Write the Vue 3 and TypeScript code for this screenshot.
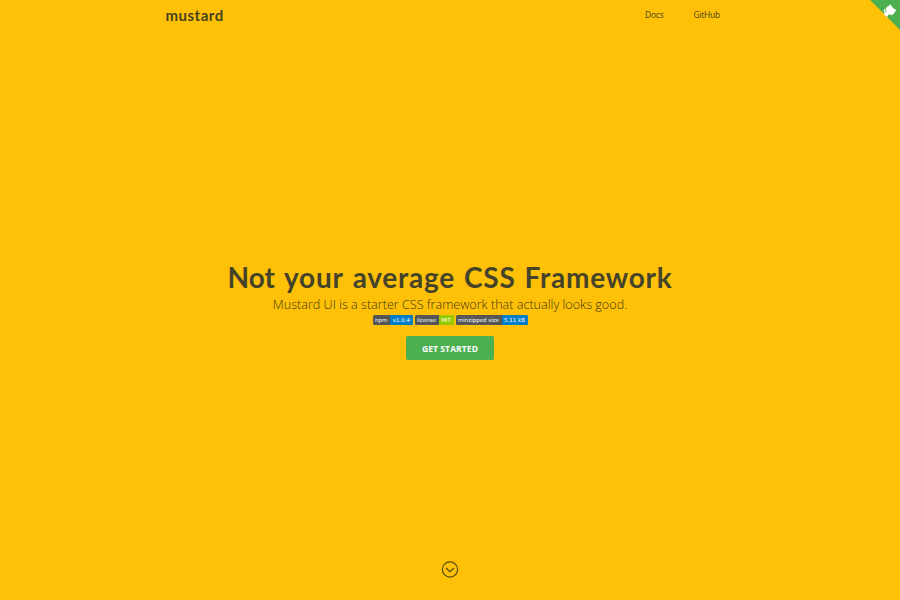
<script setup lang="ts">
interface Badge {
  label: string
  value: string
  kind: string
}

const links: string[] = ['Docs', 'GitHub']
const words: string[] = ['Not', 'your', 'average', 'CSS', 'Framework']
const badges: Badge[] = [
  { label: 'npm', value: 'v1.0.4', kind: 'npm' },
  { label: 'license', value: 'MIT', kind: 'license' },
  { label: 'minzipped size', value: '5.11 kB', kind: 'size' },
]
</script>

<template>
  <div class="page">
    <header class="bar">
      <a class="brand">mustard</a>
      <nav class="nav">
        <a v-for="link in links" :key="link">{{ link }}</a>
      </nav>
    </header>
    <a class="corner" aria-label="GitHub">
      <svg viewBox="0 0 250 250" width="30" height="30">
        <path fill="#4caf50" d="M0 0 L115 115 L130 115 L142 142 L250 250 L250 0 Z" />
        <path fill="#fff" stroke="#fff" stroke-width="5" d="M128.3 109C113.8 99.7 119 89.6 119 89.6C122 82.7 120.5 78.6 120.5 78.6C119.2 72 123.4 76.3 123.4 76.3C127.3 80.9 125.5 87.3 125.5 87.3C122.9 97.6 130.6 101.9 134.4 103.2" />
        <path fill="#fff" stroke="#fff" stroke-width="5" d="M115 115C114.9 115.1 118.7 116.5 119.8 115.4L133.7 101.6C136.9 99.2 139.9 98.4 142.2 98.6C133.8 88 127.5 74.4 143.8 58C148.5 53.4 154 51.2 159.7 51C160.3 49.4 163.2 43.6 171.4 40.1C171.4 40.1 176.1 42.5 178.8 56.2C183.1 58.6 187.2 61.8 190.9 65.4C194.5 69 197.7 73.2 200.1 77.6C213.8 80.2 216.3 84.9 216.3 84.9C212.7 93.1 206.9 96 205.4 96.6C205.1 102.4 203 107.8 198.3 112.5C181.9 128.9 168.3 122.5 157.7 114.1C157.9 116.9 156.7 120.9 152.7 124.9L141 136.5C139.8 137.7 141.6 141.9 141.8 141.8Z" />
      </svg>
    </a>
    <main class="hero">
      <h1><span v-for="word in words" :key="word">{{ word }}</span></h1>
      <p class="tagline">Mustard UI is a starter CSS framework that actually looks good.</p>
      <div class="badges">
        <span v-for="badge in badges" :key="badge.label" class="badge" :class="badge.kind">
          <span class="label">{{ badge.label }}</span><span class="value">{{ badge.value }}</span>
        </span>
      </div>
      <button class="start">GET STARTED</button>
    </main>
    <footer class="more">
      <svg viewBox="0 0 18 18" width="18" height="18" fill="none" stroke="#574b0b" stroke-width="1.2">
        <circle cx="9" cy="9.5" r="7.6" />
        <path d="M5 8 L9 11.7 L13 8" />
      </svg>
    </footer>
  </div>
</template>

<style>
body {
  background: #ffc107;
}
</style>

<style scoped>
.page {
  position: relative;
  display: flex;
  flex-direction: column;
  box-sizing: border-box;
  width: 900px;
  height: 600px;
  overflow: hidden;
  background: #ffc107;
  color: #48411f;
  font-family: "Open Sans", sans-serif;
}
.bar {
  display: flex;
  justify-content: space-between;
  align-items: center;
  height: 30px;
  padding: 0 180px 0 165.5px;
}
.brand {
  font: 700 15px/28px Lato, sans-serif;
  letter-spacing: 0.5px;
}
.nav {
  display: flex;
  gap: 30px;
  font-size: 8.5px;
  line-height: 28px;
  letter-spacing: -0.25px;
}
.corner {
  position: absolute;
  top: 0;
  right: 0;
}
.corner svg {
  display: block;
}
.hero {
  display: flex;
  flex-direction: column;
  align-items: center;
  padding-top: 229px;
}
h1 {
  display: flex;
  gap: 9px;
  margin: 0 0 1px;
  color: #454329;
  font: 700 28px/36px Lato, sans-serif;
  letter-spacing: 0.75px;
  white-space: nowrap;
}
h1 span:first-child {
  letter-spacing: 0;
}
.tagline {
  margin: 0;
  color: #40360f;
  font-size: 12.6px;
  font-weight: 300;
  line-height: 18px;
  white-space: nowrap;
}
.badges {
  display: flex;
  gap: 2px;
  height: 10px;
  margin-top: 1px;
}
.badge {
  display: flex;
  overflow: hidden;
  border-radius: 1.5px;
  background: #555;
  color: #fff;
  font: 5.5px/10px "DejaVu Sans", sans-serif;
  white-space: nowrap;
}
.badge span {
  text-align: center;
}
.npm .label {
  width: 17.5px;
}
.npm .value {
  width: 22.5px;
  background: #007ec6;
}
.license .label {
  width: 24px;
}
.license .value {
  width: 15px;
  background: #97ca00;
}
.size .label {
  width: 46px;
}
.size .value {
  width: 26px;
  background: #007ec6;
}
.start {
  width: 88px;
  height: 24px;
  margin-top: 11px;
  padding: 1px 0 0;
  border: 0;
  border-radius: 2px;
  background: #4caf50;
  color: #fff;
  font: 700 8.5px/23px "Open Sans", sans-serif;
  letter-spacing: 0.1px;
}
.more {
  display: flex;
  justify-content: center;
  margin-top: auto;
  padding-bottom: 22px;
}
.more svg {
  display: block;
}
</style>
